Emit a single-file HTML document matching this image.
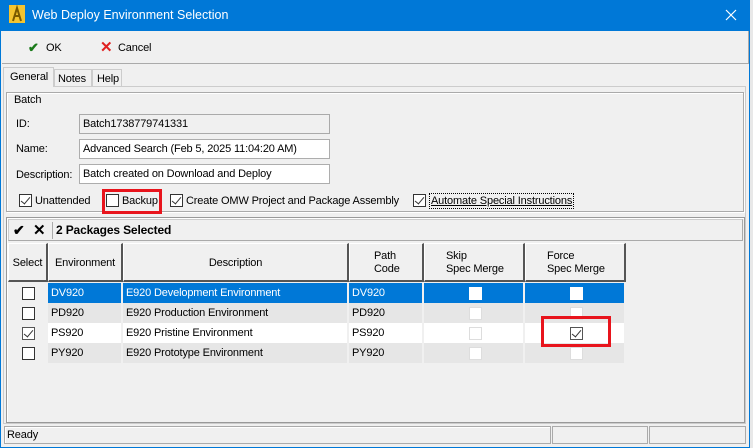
<!DOCTYPE html>
<html><head><style>
*{margin:0;padding:0;box-sizing:border-box}
body{width:753px;height:448px;background:#f0f0f0;font-family:"Liberation Sans",Tahoma,sans-serif;font-size:11px;letter-spacing:-0.15px;color:#000;position:relative;overflow:hidden}
.a{position:absolute;white-space:nowrap}
.cb{position:absolute;width:13px;height:13px;border:1px solid #333;background:#fff}
.cb.ck::after{content:"";position:absolute;left:3px;top:0px;width:4px;height:8px;border:solid #333;border-width:0 1.5px 1.5px 0;transform:rotate(40deg)}
.fld{position:absolute;left:79px;width:251px;height:20px;border:1px solid #adadad;background:#fff;padding:3px 0 0 3px}
.hd{position:absolute;top:243px;height:39px;border-right:2px solid #555;border-bottom:2px solid #555;border-left:1px solid #fff;border-top:1px solid #fff;background:#f0f0f0;text-align:center;line-height:13px}
.row{position:absolute;left:8px;width:618px;height:20px}
.c{position:absolute;top:0;height:20px;line-height:20px;padding-left:3px;border-right:2px solid #f0f0f0}
.wb{position:absolute;width:13px;height:13px;background:#fff;border:1px solid #ddd}
</style></head><body>
<div class="a" style="left:0;top:0;width:750px;height:448px;border:1px solid #0078d7;border-top:none"></div>
<div class="a" style="left:750px;top:0;width:3px;height:448px;background:#e8e8e8"></div>
<div class="a" style="left:0;top:0;width:750px;height:31px;background:#0078d7"></div>
<svg class="a" style="left:9px;top:5px" width="16" height="18"><rect x="0" y="0" width="16" height="18" fill="#f4c430"/><path d="M4 16 L8 3 L12 16 M5.5 11 H10.5" stroke="#7a5a00" stroke-width="2" fill="none"/></svg>
<div class="a" style="left:32px;top:8px;color:#fff;font-size:12.5px;letter-spacing:0">Web Deploy Environment Selection</div>
<svg class="a" style="left:725px;top:9px" width="12" height="12"><path d="M1 1 L11 11 M11 1 L1 11" stroke="#fff" stroke-width="1.2"/></svg>
<div class="a" style="left:2px;top:31px;width:747px;height:33px;border-bottom:1px solid #aaa;border-right:1px solid #aaa"></div>
<div class="a" style="left:28px;top:40px;color:#1a7a1a;font-size:13px;font-weight:bold">✔</div>
<div class="a" style="left:46px;top:42px">OK</div>
<div class="a" style="left:100px;top:38px;color:#e02020;font-size:15px;font-weight:bold">✕</div>
<div class="a" style="left:118px;top:42px">Cancel</div>
<div class="a" style="left:3px;top:86px;width:743px;height:338px;border:1px solid #ccc;background:#f0f0f0"></div>
<div class="a" style="left:3px;top:67px;width:51px;height:20px;border:1px solid #ccc;border-bottom:none;background:#f0f0f0;padding:3px 0 0 6px">General</div>
<div class="a" style="left:54px;top:69px;width:38px;height:18px;border:1px solid #ccc;padding:3px 0 0 3px;background:#f0f0f0">Notes</div>
<div class="a" style="left:92px;top:69px;width:30px;height:18px;border:1px solid #ccc;padding:3px 0 0 4px;background:#f0f0f0">Help</div>
<div class="a" style="left:6px;top:92px;width:738px;height:120px;border:1px solid #aaa;box-shadow:inset 1px 1px 0 #fff,1px 1px 0 #fff"></div>
<div class="a" style="left:12px;top:94px;background:#f0f0f0;padding:0 2px">Batch</div>
<div class="a" style="left:16px;top:118px">ID:</div>
<div class="fld" style="top:114px;background:#f0f0f0;border-color:#aaa">Batch1738779741331</div>
<div class="a" style="left:16px;top:143px">Name:</div>
<div class="fld" style="top:139px">Advanced Search (Feb 5, 2025 11:04:20 AM)</div>
<div class="a" style="left:16px;top:169px">Description:</div>
<div class="fld" style="top:164px">Batch created on Download and Deploy</div>
<div class="cb ck" style="left:19px;top:194px"></div><div class="a" style="left:35px;top:195px">Unattended</div>
<div class="cb" style="left:106px;top:194px"></div><div class="a" style="left:122px;top:195px">Backup</div>
<div class="a" style="left:102px;top:189px;width:60px;height:25px;border:3px solid #e8141c"></div>
<div class="cb ck" style="left:170px;top:194px"></div><div class="a" style="left:186px;top:195px">Create OMW Project and Package Assembly</div>
<div class="cb ck" style="left:413px;top:194px"></div><div class="a" style="left:429px;top:193px;border:1px dotted #000;padding:1px 1px;text-decoration:underline">Automate Special Instructions</div>
<div class="a" style="left:6px;top:217px;width:739px;height:206px;border:1px solid #999;box-shadow:inset 1px 1px 0 #fff"></div>
<div class="a" style="left:8px;top:219px;width:735px;height:22px;border:1px solid #ccc;border-right-color:#aaa;border-bottom-color:#aaa"></div>
<div class="a" style="left:13px;top:222px;font-size:14px;font-weight:bold">✔</div>
<div class="a" style="left:33px;top:221px;font-size:15px;font-weight:bold">✕</div>
<div class="a" style="left:52px;top:222px;width:1px;height:17px;background:#aaa"></div>
<div class="a" style="left:56px;top:223px;font-weight:bold;font-size:12px">2 Packages Selected</div>
<div class="hd" style="left:8px;width:40px;line-height:39px">Select</div>
<div class="hd" style="left:48px;width:75px;line-height:39px">Environment</div>
<div class="hd" style="left:123px;width:226px;line-height:39px">Description</div>
<div class="hd" style="left:349px;width:75px;padding-top:6px;text-align:left;padding-left:24px">Path<br>Code</div>
<div class="hd" style="left:424px;width:101px;padding-top:6px;text-align:left;padding-left:21px">Skip<br>Spec Merge</div>
<div class="hd" style="left:525px;width:101px;padding-top:6px;text-align:left;padding-left:21px">Force<br>Spec Merge</div>
<div class="row" style="top:283px;background:#0078d7;color:#fff"><div class="c" style="left:0;width:40px;background:#f0f0f0"></div><div class="c" style="left:40px;width:75px">DV920</div><div class="c" style="left:115px;width:226px">E920 Development Environment</div><div class="c" style="left:341px;width:75px">DV920</div><div class="c" style="left:416px;width:101px"></div><div class="c" style="left:517px;width:101px"></div></div>
<div class="row" style="top:303px;background:#e6e6e6"><div class="c" style="left:0;width:40px;background:#f0f0f0"></div><div class="c" style="left:40px;width:75px">PD920</div><div class="c" style="left:115px;width:226px">E920 Production Environment</div><div class="c" style="left:341px;width:75px">PD920</div><div class="c" style="left:416px;width:101px"></div><div class="c" style="left:517px;width:101px"></div></div>
<div class="row" style="top:323px;background:#fff"><div class="c" style="left:0;width:40px;background:#f0f0f0"></div><div class="c" style="left:40px;width:75px">PS920</div><div class="c" style="left:115px;width:226px">E920 Pristine Environment</div><div class="c" style="left:341px;width:75px">PS920</div><div class="c" style="left:416px;width:101px"></div><div class="c" style="left:517px;width:101px"></div></div>
<div class="row" style="top:343px;background:#e6e6e6"><div class="c" style="left:0;width:40px;background:#f0f0f0"></div><div class="c" style="left:40px;width:75px">PY920</div><div class="c" style="left:115px;width:226px">E920 Prototype Environment</div><div class="c" style="left:341px;width:75px">PY920</div><div class="c" style="left:416px;width:101px"></div><div class="c" style="left:517px;width:101px"></div></div>
<div class="cb" style="left:22px;top:287px"></div>
<div class="cb" style="left:22px;top:307px"></div>
<div class="cb ck" style="left:22px;top:327px;border-color:#555"></div>
<div class="cb" style="left:22px;top:347px"></div>
<div class="wb" style="left:469px;top:287px;border-color:#fff"></div>
<div class="wb" style="left:570px;top:287px;border-color:#fff"></div>
<div class="wb" style="left:469px;top:307px"></div>
<div class="wb" style="left:570px;top:307px"></div>
<div class="wb" style="left:469px;top:327px"></div>
<div class="cb ck" style="left:570px;top:327px;border-color:#555"></div>
<div class="wb" style="left:469px;top:347px"></div>
<div class="wb" style="left:570px;top:347px"></div>
<div class="a" style="left:541px;top:316px;width:70px;height:31px;border:3px solid #e8141c"></div>
<div class="a" style="left:4px;top:426px;width:547px;height:18px;border:1px solid #aaa;box-shadow:inset 1px 1px 0 #fff;padding:2px 0 0 2px">Ready</div>
<div class="a" style="left:552px;top:426px;width:96px;height:18px;border:1px solid #aaa"></div>
<div class="a" style="left:649px;top:426px;width:97px;height:18px;border:1px solid #aaa"></div>
</body></html>
